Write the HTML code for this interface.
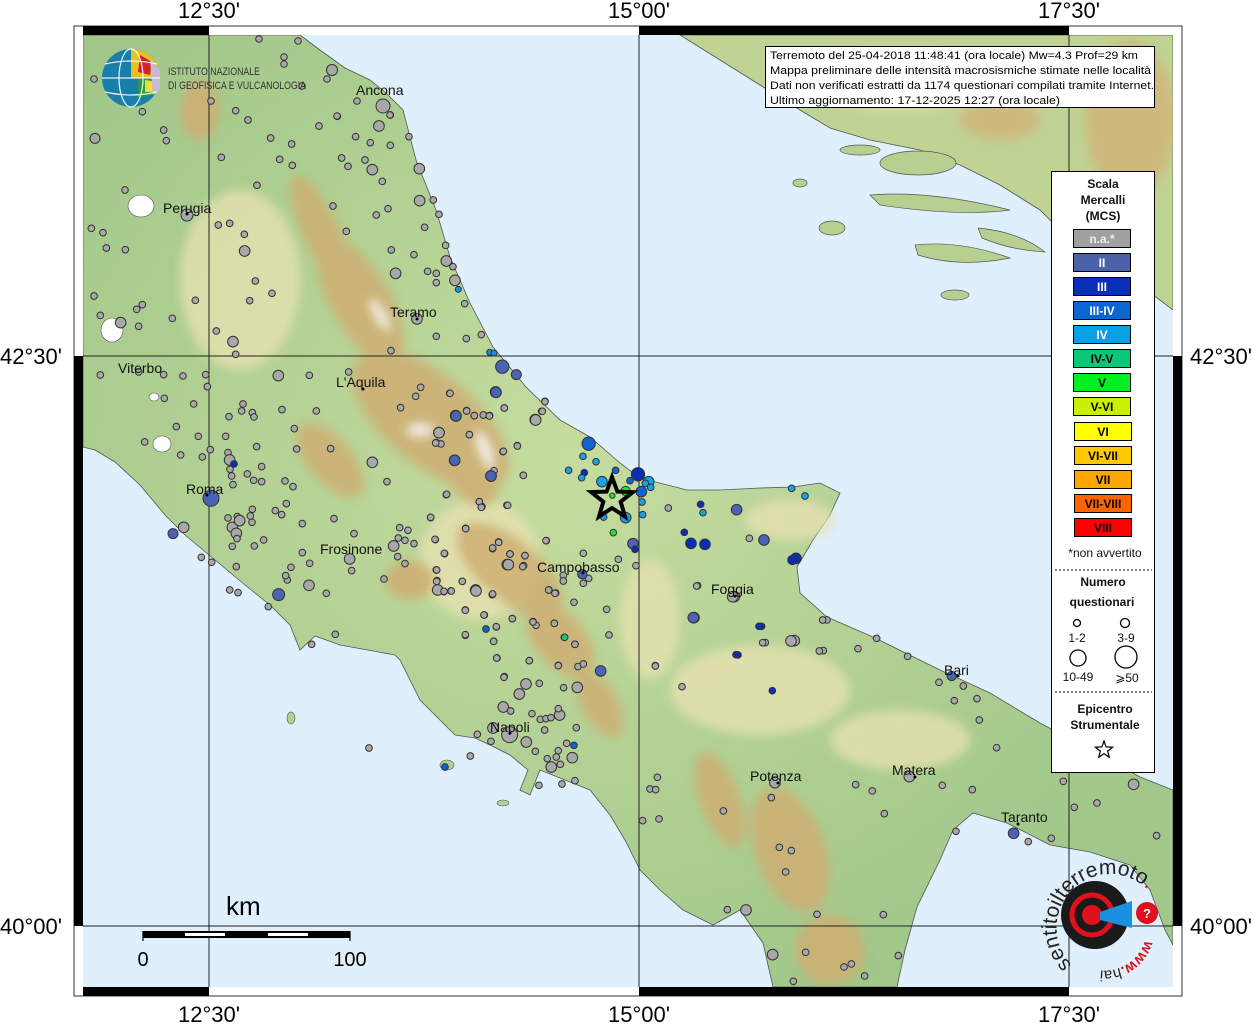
<!DOCTYPE html>
<html><head><meta charset="utf-8"><style>
html,body{margin:0;padding:0;background:#fff;width:1255px;height:1024px;overflow:hidden}
svg{display:block}
text{font-family:"Liberation Sans","DejaVu Sans",sans-serif}
</style></head><body>
<svg width="1255" height="1024" viewBox="0 0 1255 1024" xmlns="http://www.w3.org/2000/svg">
<defs>
<clipPath id="mc"><rect x="83" y="35" width="1090" height="952"/></clipPath>
<radialGradient id="lg" cx="45%" cy="45%" r="60%"><stop offset="0" stop-color="#c6dc9f"/><stop offset="1" stop-color="#a1c78a"/></radialGradient>
<filter id="bl" x="-20%" y="-20%" width="140%" height="140%"><feGaussianBlur stdDeviation="5"/></filter>
</defs>
<rect x="74" y="26" width="1108" height="970" fill="#fff" stroke="#333" stroke-width="1"/>
<rect x="83" y="26" width="126" height="9" fill="#000"/>
<rect x="639" y="26" width="430" height="9" fill="#000"/>
<rect x="83" y="987" width="126" height="9" fill="#000"/>
<rect x="639" y="987" width="430" height="9" fill="#000"/>
<rect x="74" y="356" width="9" height="570" fill="#000"/>
<rect x="1173" y="356" width="9" height="570" fill="#000"/>
<g clip-path="url(#mc)">
<rect x="83" y="35" width="1090" height="952" fill="#dff0fc"/>
<path id="italy" fill="url(#lg)" stroke="#555" stroke-width="0.8" d="M83,35 L300,35 L320,50 L345,68 L370,80 L385,92 L403,110 L416,160 L436,210 L450,257 L470,303 L493,347 L526,387 L560,420 L590,437 L620,463 L640,478 L687,490 L720,490 L760,488 L793,487 L820,483 L840,493 L830,515 L813,540 L797,567 L800,593 L827,617 L873,637 L940,670 L990,693 L1040,723 L1100,755 L1140,777 L1173,790 L1173,945 L1165,930 L1150,890 L1130,865 L1090,852 L1050,845 L1007,823 L973,813 L953,830 L940,860 L917,907 L905,950 L897,987 L773,987 L763,943 L740,910 L713,925 L683,910 L660,890 L640,870 L625,840 L610,815 L590,790 L560,778 L540,770 L530,795 L520,790 L528,770 L510,755 L490,745 L475,738 L455,735 L420,700 L400,660 L395,655 L340,645 L315,636 L300,650 L290,625 L270,605 L245,585 L215,560 L185,535 L165,515 L140,485 L115,462 L95,450 L83,447 Z"/>
<path fill="#bfd394" stroke="#555" stroke-width="0.8" d="M680,35 L1173,35 L1173,310 L1140,285 L1100,260 L1060,230 L1040,210 L1000,185 L960,165 L920,150 L870,140 L830,128 L800,110 L760,85 L720,60 Z"/>
<g filter="url(#bl)">
<g fill="#d3b47a" opacity="0.8">
<ellipse cx="1130" cy="120" rx="45" ry="80"/>
<ellipse cx="1000" cy="120" rx="40" ry="20"/>
<ellipse cx="1080" cy="210" rx="20" ry="30"/>
</g>
<g fill="#efe4b8" opacity="0.7">
<ellipse cx="900" cy="80" rx="80" ry="30"/>
</g>
</g>
<g fill="#b8cf92" stroke="#555" stroke-width="0.7">
<ellipse cx="918" cy="163" rx="38" ry="12"/>
<path d="M870,195 Q930,190 1010,210 Q960,217 880,205 Z"/>
<path d="M915,245 Q960,240 1010,258 Q960,268 918,255 Z"/>
<path d="M978,228 Q1020,232 1045,252 Q1010,250 982,238 Z"/>
<ellipse cx="832" cy="228" rx="13" ry="7"/>
<ellipse cx="955" cy="295" rx="14" ry="5"/>
<ellipse cx="800" cy="183" rx="7" ry="4"/>
<ellipse cx="860" cy="150" rx="20" ry="5"/>
</g>
<g clip-path="url(#mc)" filter="url(#bl)">
<g fill="#e9e2b2" opacity="0.75">
<ellipse cx="240" cy="280" rx="60" ry="90"/>
<ellipse cx="760" cy="690" rx="90" ry="45"/>
<ellipse cx="790" cy="520" rx="45" ry="20"/>
<ellipse cx="480" cy="560" rx="60" ry="60"/>
<ellipse cx="650" cy="620" rx="30" ry="60"/>
<ellipse cx="900" cy="740" rx="70" ry="30"/>
</g>
<g fill="#cfae73" opacity="0.85">
<ellipse cx="320" cy="230" rx="18" ry="60" transform="rotate(-25 320 230)"/>
<ellipse cx="360" cy="300" rx="30" ry="70" transform="rotate(-30 360 300)"/>
<ellipse cx="430" cy="420" rx="45" ry="95" transform="rotate(-50 430 420)"/>
<ellipse cx="330" cy="460" rx="22" ry="45" transform="rotate(-40 330 460)"/>
<ellipse cx="470" cy="470" rx="25" ry="40" transform="rotate(-30 470 470)"/>
<ellipse cx="510" cy="570" rx="30" ry="65" transform="rotate(-50 510 570)"/>
<ellipse cx="560" cy="640" rx="25" ry="45" transform="rotate(-40 560 640)"/>
<ellipse cx="600" cy="705" rx="18" ry="35" transform="rotate(-30 600 705)"/>
<ellipse cx="720" cy="800" rx="20" ry="50" transform="rotate(-20 720 800)"/>
<ellipse cx="790" cy="850" rx="35" ry="65" transform="rotate(-20 790 850)"/>
<ellipse cx="830" cy="950" rx="35" ry="35"/>
<ellipse cx="200" cy="110" rx="20" ry="30"/>
<ellipse cx="410" cy="580" rx="25" ry="20"/>
</g>
</g>
<g fill="#f6f2ee" opacity="0.9" filter="url(#bl)">
<ellipse cx="380" cy="315" rx="6" ry="18" transform="rotate(-30 380 315)"/>
<ellipse cx="485" cy="450" rx="7" ry="20" transform="rotate(-20 485 450)"/>
<ellipse cx="420" cy="430" rx="14" ry="7"/>
</g>
<g fill="#fff" stroke="#555" stroke-width="0.6">
<ellipse cx="141" cy="206" rx="13" ry="11"/>
<ellipse cx="112" cy="330" rx="11" ry="12"/>
<ellipse cx="162" cy="444" rx="9" ry="8"/>
<ellipse cx="154" cy="397" rx="5" ry="4"/>
</g>
<g fill="#b8cf92" stroke="#555" stroke-width="0.6">
<ellipse cx="447" cy="765" rx="7" ry="5"/>
<ellipse cx="291" cy="718" rx="4" ry="6"/>
<ellipse cx="503" cy="803" rx="6" ry="3"/>
</g>
<g stroke="#222" stroke-width="1">
<line x1="209" y1="35" x2="209" y2="987"/><line x1="639" y1="35" x2="639" y2="987"/><line x1="1069" y1="35" x2="1069" y2="987"/>
<line x1="83" y1="356" x2="1173" y2="356"/><line x1="83" y1="926" x2="1173" y2="926"/>
</g>
<g stroke="#333" stroke-width="3" transform="translate(83,100) scale(0.3333)">
<g fill="#a8a8a8">
<circle cx="178" cy="35" r="10"/><circle cx="242" cy="90" r="10"/><circle cx="250" cy="122" r="10"/><circle cx="36" cy="115" r="15"/><circle cx="458" cy="32" r="10"/><circle cx="495" cy="60" r="10"/><circle cx="415" cy="172" r="10"/><circle cx="563" cy="114" r="10"/><circle cx="626" cy="132" r="10"/><circle cx="590" cy="178" r="10"/><circle cx="628" cy="196" r="10"/><circle cx="708" cy="78" r="10"/><circle cx="763" cy="49" r="10"/><circle cx="903" cy="18" r="18"/><circle cx="888" cy="78" r="16"/><circle cx="922" cy="45" r="10"/><circle cx="818" cy="110" r="10"/><circle cx="862" cy="128" r="10"/><circle cx="922" cy="136" r="10"/><circle cx="978" cy="110" r="10"/><circle cx="776" cy="174" r="10"/><circle cx="795" cy="199" r="10"/><circle cx="846" cy="180" r="10"/><circle cx="868" cy="209" r="16"/><circle cx="1009" cy="206" r="16"/><circle cx="898" cy="244" r="10"/><circle cx="522" cy="256" r="10"/><circle cx="126" cy="270" r="10"/><circle cx="312" cy="345" r="18"/><circle cx="406" cy="375" r="10"/><circle cx="440" cy="370" r="10"/><circle cx="484" cy="403" r="10"/><circle cx="25" cy="385" r="10"/><circle cx="60" cy="398" r="10"/><circle cx="70" cy="444" r="10"/><circle cx="127" cy="449" r="10"/><circle cx="485" cy="453" r="16"/><circle cx="750" cy="318" r="10"/><circle cx="915" cy="326" r="10"/><circle cx="880" cy="345" r="10"/><circle cx="1010" cy="302" r="16"/><circle cx="1051" cy="300" r="10"/><circle cx="1068" cy="343" r="10"/><circle cx="1025" cy="382" r="10"/><circle cx="790" cy="394" r="10"/><circle cx="925" cy="450" r="10"/><circle cx="993" cy="464" r="10"/><circle cx="1088" cy="436" r="10"/><circle cx="1090" cy="483" r="16"/><circle cx="1110" cy="500" r="10"/><circle cx="938" cy="520" r="16"/><circle cx="1034" cy="514" r="10"/><circle cx="1060" cy="520" r="10"/><circle cx="1060" cy="548" r="10"/><circle cx="1116" cy="541" r="16"/><circle cx="1145" cy="611" r="10"/><circle cx="517" cy="543" r="10"/><circle cx="567" cy="580" r="10"/><circle cx="500" cy="602" r="10"/><circle cx="337" cy="601" r="10"/><circle cx="178" cy="614" r="10"/><circle cx="161" cy="628" r="10"/><circle cx="33" cy="588" r="10"/><circle cx="52" cy="646" r="10"/><circle cx="113" cy="668" r="16"/><circle cx="167" cy="679" r="10"/><circle cx="268" cy="655" r="10"/><circle cx="400" cy="693" r="10"/><circle cx="450" cy="725" r="16"/><circle cx="458" cy="763" r="10"/><circle cx="1002" cy="657" r="16"/><circle cx="1060" cy="709" r="10"/><circle cx="1150" cy="716" r="10"/><circle cx="1195" cy="704" r="10"/><circle cx="924" cy="752" r="10"/><circle cx="52" cy="825" r="10"/><circle cx="167" cy="816" r="10"/><circle cx="242" cy="824" r="10"/><circle cx="300" cy="828" r="10"/><circle cx="368" cy="824" r="10"/><circle cx="373" cy="860" r="10"/><circle cx="586" cy="827" r="16"/><circle cx="679" cy="826" r="10"/><circle cx="797" cy="816" r="10"/><circle cx="1013" cy="862" r="10"/><circle cx="998" cy="889" r="10"/><circle cx="1100" cy="880" r="10"/><circle cx="953" cy="923" r="10"/><circle cx="1151" cy="932" r="10"/><circle cx="1174" cy="947" r="10"/><circle cx="1202" cy="945" r="10"/><circle cx="1220" cy="947" r="10"/><circle cx="1264" cy="924" r="10"/><circle cx="1357" cy="959" r="16"/><circle cx="1386" cy="904" r="10"/><circle cx="1376" cy="934" r="10"/><circle cx="244" cy="895" r="10"/><circle cx="332" cy="912" r="10"/><circle cx="480" cy="912" r="10"/><circle cx="476" cy="933" r="10"/><circle cx="508" cy="938" r="10"/><circle cx="513" cy="951" r="10"/><circle cx="597" cy="929" r="10"/><circle cx="700" cy="933" r="10"/><circle cx="438" cy="950" r="10"/><circle cx="280" cy="980" r="10"/><circle cx="346" cy="1009" r="10"/><circle cx="185" cy="1026" r="10"/><circle cx="293" cy="1065" r="10"/><circle cx="358" cy="1071" r="10"/><circle cx="382" cy="1049" r="10"/><circle cx="428" cy="1009" r="10"/><circle cx="435" cy="1058" r="10"/><circle cx="440" cy="1080" r="16"/><circle cx="441" cy="1108" r="10"/><circle cx="446" cy="1128" r="10"/><circle cx="450" cy="1154" r="10"/><circle cx="493" cy="1122" r="10"/><circle cx="512" cy="1141" r="10"/><circle cx="536" cy="1145" r="10"/><circle cx="536" cy="1100" r="10"/><circle cx="521" cy="1040" r="10"/><circle cx="634" cy="986" r="10"/><circle cx="641" cy="1047" r="10"/><circle cx="743" cy="1046" r="10"/><circle cx="868" cy="1087" r="16"/><circle cx="912" cy="1145" r="10"/><circle cx="1068" cy="998" r="16"/><circle cx="1060" cy="1028" r="10"/><circle cx="1074" cy="1032" r="10"/><circle cx="1159" cy="1004" r="10"/><circle cx="1260" cy="1055" r="10"/><circle cx="1303" cy="1037" r="10"/><circle cx="1321" cy="1126" r="10"/><circle cx="1090" cy="1184" r="10"/><circle cx="1189" cy="1205" r="10"/><circle cx="1197" cy="1220" r="10"/><circle cx="1272" cy="1216" r="10"/><circle cx="606" cy="1143" r="10"/><circle cx="630" cy="1160" r="10"/><circle cx="610" cy="1211" r="10"/><circle cx="577" cy="1232" r="10"/><circle cx="596" cy="1244" r="10"/><circle cx="658" cy="1271" r="10"/><circle cx="753" cy="1256" r="10"/><circle cx="813" cy="1301" r="10"/><circle cx="302" cy="1282" r="16"/><circle cx="448" cy="1282" r="16"/><circle cx="435" cy="1254" r="10"/><circle cx="463" cy="1250" r="10"/><circle cx="470" cy="1262" r="16"/><circle cx="502" cy="1248" r="10"/><circle cx="508" cy="1228" r="10"/><circle cx="507" cy="1267" r="10"/><circle cx="460" cy="1300" r="16"/><circle cx="462" cy="1316" r="10"/><circle cx="448" cy="1339" r="10"/><circle cx="542" cy="1320" r="10"/><circle cx="514" cy="1338" r="10"/><circle cx="355" cy="1372" r="10"/><circle cx="386" cy="1387" r="10"/><circle cx="460" cy="1400" r="10"/><circle cx="658" cy="1358" r="10"/><circle cx="680" cy="1390" r="10"/><circle cx="800" cy="1377" r="16"/><circle cx="806" cy="1412" r="10"/><circle cx="903" cy="1437" r="10"/><circle cx="932" cy="1338" r="16"/><circle cx="950" cy="1283" r="10"/><circle cx="975" cy="1291" r="10"/><circle cx="966" cy="1321" r="10"/><circle cx="993" cy="1331" r="10"/><circle cx="946" cy="1314" r="10"/><circle cx="944" cy="1370" r="10"/><circle cx="966" cy="1391" r="10"/><circle cx="1043" cy="1253" r="10"/><circle cx="1148" cy="1285" r="10"/><circle cx="1057" cy="1319" r="10"/><circle cx="1085" cy="1361" r="10"/><circle cx="1060" cy="1410" r="10"/><circle cx="1062" cy="1442" r="10"/><circle cx="1138" cy="1444" r="10"/><circle cx="1229" cy="1346" r="10"/><circle cx="1247" cy="1326" r="10"/><circle cx="1273" cy="1394" r="16"/><circle cx="1281" cy="1362" r="10"/><circle cx="1322" cy="1397" r="10"/><circle cx="1326" cy="1367" r="10"/><circle cx="1390" cy="1322" r="10"/><circle cx="678" cy="1456" r="16"/><circle cx="613" cy="1440" r="10"/><circle cx="608" cy="1427" r="10"/><circle cx="624" cy="1402" r="10"/><circle cx="440" cy="1470" r="10"/><circle cx="465" cy="1478" r="10"/><circle cx="730" cy="1480" r="10"/><circle cx="1062" cy="1470" r="10"/><circle cx="1083" cy="1475" r="10"/><circle cx="1104" cy="1473" r="10"/><circle cx="1178" cy="1470" r="16"/><circle cx="1228" cy="1484" r="10"/><circle cx="1398" cy="1470" r="10"/><circle cx="1418" cy="1479" r="10"/>
</g>
<g fill="#4b62b5"><circle cx="384" cy="1195" r="24"/><circle cx="270" cy="1301" r="15"/><circle cx="1258" cy="800" r="20"/><circle cx="1300" cy="824" r="15"/><circle cx="1238" cy="876" r="16"/><circle cx="1118" cy="947" r="16"/><circle cx="1115" cy="1081" r="16"/><circle cx="1224" cy="1128" r="16"/><circle cx="587" cy="1484" r="18"/></g>
<g fill="#0b2db5"><circle cx="453" cy="1092" r="10"/></g>
<g fill="#1a8de0"><circle cx="1126" cy="568" r="9"/><circle cx="1220" cy="757" r="9"/><circle cx="1233" cy="759" r="9"/></g>
</g>
<g stroke="#333" stroke-width="3" transform="translate(420,380) scale(0.3333)">
<g fill="#a8a8a8">
<circle cx="90" cy="40" r="10"/><circle cx="253" cy="84" r="10"/><circle cx="375" cy="65" r="10"/><circle cx="140" cy="93" r="10"/><circle cx="163" cy="107" r="10"/><circle cx="190" cy="105" r="10"/><circle cx="208" cy="108" r="10"/><circle cx="347" cy="120" r="16"/><circle cx="367" cy="94" r="10"/><circle cx="57" cy="158" r="16"/><circle cx="148" cy="164" r="10"/><circle cx="47" cy="189" r="10"/><circle cx="250" cy="214" r="10"/><circle cx="292" cy="198" r="10"/><circle cx="222" cy="272" r="10"/><circle cx="310" cy="286" r="10"/><circle cx="80" cy="343" r="10"/><circle cx="178" cy="365" r="10"/><circle cx="184" cy="382" r="10"/><circle cx="263" cy="376" r="10"/><circle cx="32" cy="412" r="10"/><circle cx="137" cy="446" r="10"/><circle cx="45" cy="478" r="10"/><circle cx="236" cy="487" r="10"/><circle cx="218" cy="504" r="10"/><circle cx="73" cy="520" r="10"/><circle cx="270" cy="522" r="10"/><circle cx="315" cy="527" r="10"/><circle cx="265" cy="554" r="16"/><circle cx="308" cy="560" r="10"/><circle cx="378" cy="482" r="10"/><circle cx="490" cy="520" r="10"/><circle cx="595" cy="538" r="10"/><circle cx="648" cy="557" r="10"/><circle cx="745" cy="384" r="10"/><circle cx="988" cy="475" r="10"/><circle cx="833" cy="617" r="10"/><circle cx="943" cy="650" r="16"/><circle cx="50" cy="570" r="10"/><circle cx="50" cy="604" r="10"/><circle cx="53" cy="630" r="16"/><circle cx="72" cy="634" r="10"/><circle cx="94" cy="633" r="10"/><circle cx="127" cy="604" r="10"/><circle cx="168" cy="633" r="16"/><circle cx="218" cy="642" r="10"/><circle cx="136" cy="690" r="10"/><circle cx="193" cy="705" r="10"/><circle cx="229" cy="741" r="10"/><circle cx="277" cy="716" r="10"/><circle cx="339" cy="725" r="10"/><circle cx="348" cy="736" r="10"/><circle cx="386" cy="630" r="10"/><circle cx="405" cy="640" r="10"/><circle cx="462" cy="667" r="10"/><circle cx="403" cy="730" r="10"/><circle cx="430" cy="586" r="10"/><circle cx="430" cy="603" r="10"/><circle cx="506" cy="595" r="10"/><circle cx="490" cy="610" r="10"/><circle cx="560" cy="688" r="10"/><circle cx="567" cy="765" r="10"/><circle cx="465" cy="793" r="10"/><circle cx="136" cy="766" r="10"/><circle cx="221" cy="784" r="10"/><circle cx="231" cy="834" r="10"/><circle cx="328" cy="842" r="10"/><circle cx="415" cy="856" r="10"/><circle cx="474" cy="860" r="10"/><circle cx="490" cy="852" r="10"/><circle cx="253" cy="890" r="10"/><circle cx="706" cy="857" r="10"/><circle cx="1221" cy="720" r="10"/><circle cx="1036" cy="788" r="10"/><circle cx="1123" cy="782" r="16"/><circle cx="1210" cy="812" r="10"/>
</g>
<g fill="#4b62b5"><circle cx="228" cy="37" r="16"/><circle cx="108" cy="108" r="16"/><circle cx="104" cy="241" r="16"/><circle cx="213" cy="288" r="16"/><circle cx="1032" cy="480" r="16"/><circle cx="822" cy="713" r="16"/><circle cx="542" cy="873" r="16"/><circle cx="487" cy="583" r="14"/><circle cx="950" cy="389" r="16"/><circle cx="639" cy="491" r="16"/></g>
<g fill="#0b2db5"><circle cx="654" cy="283" r="20"/><circle cx="493" cy="278" r="10"/><circle cx="813" cy="490" r="16"/><circle cx="855" cy="493" r="16"/><circle cx="1128" cy="535" r="16"/><circle cx="793" cy="457" r="10"/><circle cx="842" cy="373" r="10"/><circle cx="1025" cy="739" r="10"/><circle cx="954" cy="825" r="10"/><circle cx="645" cy="508" r="10"/></g>
<g fill="#0f63d2"><circle cx="506" cy="191" r="20"/><circle cx="587" cy="271" r="10"/><circle cx="664" cy="335" r="16"/><circle cx="630" cy="302" r="10"/></g>
<g fill="#15a0e8"><circle cx="489" cy="229" r="10"/><circle cx="528" cy="245" r="10"/><circle cx="446" cy="271" r="10"/><circle cx="485" cy="293" r="10"/><circle cx="546" cy="305" r="16"/><circle cx="686" cy="305" r="16"/><circle cx="676" cy="310" r="10"/><circle cx="692" cy="322" r="10"/><circle cx="617" cy="413" r="16"/><circle cx="666" cy="366" r="10"/><circle cx="668" cy="404" r="10"/><circle cx="849" cy="398" r="10"/><circle cx="1115" cy="325" r="10"/><circle cx="1155" cy="348" r="10"/><circle cx="551" cy="411" r="10"/></g>
<g fill="#0ac878"><circle cx="433" cy="772" r="10"/></g>
<g fill="#11ee22"><circle cx="617" cy="333" r="14"/><circle cx="580" cy="458" r="10"/><circle cx="577" cy="347" r="8"/></g>
</g>
<g stroke="#333" stroke-width="3" transform="translate(83,600) scale(0.3333)">
<g fill="#a8a8a8">
<circle cx="556" cy="20" r="10"/><circle cx="686" cy="133" r="10"/><circle cx="757" cy="103" r="10"/><circle cx="858" cy="444" r="10"/><circle cx="1147" cy="31" r="10"/><circle cx="1203" cy="45" r="10"/><circle cx="1240" cy="80" r="10"/><circle cx="1288" cy="56" r="10"/><circle cx="1350" cy="66" r="10"/><circle cx="1414" cy="70" r="10"/><circle cx="1147" cy="104" r="10"/><circle cx="1232" cy="124" r="10"/><circle cx="1241" cy="174" r="10"/><circle cx="1339" cy="182" r="10"/><circle cx="1426" cy="197" r="10"/><circle cx="1263" cy="232" r="10"/><circle cx="1309" cy="282" r="16"/><circle cx="1329" cy="252" r="16"/><circle cx="1369" cy="250" r="10"/><circle cx="1442" cy="263" r="10"/><circle cx="1483" cy="262" r="16"/><circle cx="1261" cy="321" r="16"/><circle cx="1283" cy="333" r="10"/><circle cx="1347" cy="341" r="10"/><circle cx="1372" cy="358" r="10"/><circle cx="1389" cy="356" r="10"/><circle cx="1404" cy="353" r="10"/><circle cx="1430" cy="345" r="16"/><circle cx="1426" cy="326" r="10"/><circle cx="1230" cy="384" r="16"/><circle cx="1280" cy="404" r="24"/><circle cx="1330" cy="426" r="16"/><circle cx="1385" cy="390" r="10"/><circle cx="1183" cy="403" r="10"/><circle cx="1224" cy="424" r="10"/><circle cx="1162" cy="468" r="10"/><circle cx="1357" cy="454" r="10"/><circle cx="1420" cy="471" r="10"/><circle cx="1426" cy="452" r="10"/><circle cx="1468" cy="473" r="16"/><circle cx="1393" cy="476" r="10"/><circle cx="1405" cy="501" r="16"/><circle cx="1432" cy="493" r="10"/><circle cx="1476" cy="542" r="10"/><circle cx="1437" cy="552" r="10"/><circle cx="1368" cy="556" r="10"/><circle cx="1451" cy="430" r="10"/><circle cx="1480" cy="383" r="10"/><circle cx="1476" cy="133" r="10"/>
</g>
<g fill="#0f63d2"><circle cx="1209" cy="87" r="10"/><circle cx="1473" cy="436" r="10"/><circle cx="1086" cy="501" r="10"/></g>
<g fill="#0ac878"><circle cx="1445" cy="112" r="10"/></g>
</g>
<g stroke="#333" stroke-width="3" transform="translate(640,560) scale(0.3333)">
<g fill="#a8a8a8">
<circle cx="170" cy="78" r="10"/><circle cx="278" cy="110" r="16"/><circle cx="548" cy="180" r="10"/><circle cx="453" cy="243" r="16"/><circle cx="368" cy="248" r="10"/><circle cx="538" cy="273" r="10"/><circle cx="654" cy="266" r="10"/><circle cx="710" cy="235" r="10"/><circle cx="803" cy="289" r="10"/><circle cx="46" cy="318" r="10"/><circle cx="126" cy="380" r="10"/><circle cx="897" cy="367" r="10"/><circle cx="970" cy="378" r="10"/><circle cx="943" cy="422" r="10"/><circle cx="1011" cy="416" r="10"/><circle cx="1018" cy="480" r="10"/><circle cx="1070" cy="563" r="10"/><circle cx="52" cy="652" r="10"/><circle cx="30" cy="687" r="10"/><circle cx="47" cy="689" r="10"/><circle cx="405" cy="668" r="16"/><circle cx="394" cy="713" r="10"/><circle cx="250" cy="753" r="10"/><circle cx="57" cy="777" r="10"/><circle cx="8" cy="782" r="10"/><circle cx="647" cy="674" r="10"/><circle cx="697" cy="693" r="10"/><circle cx="808" cy="650" r="16"/><circle cx="907" cy="676" r="10"/><circle cx="997" cy="689" r="10"/><circle cx="733" cy="761" r="10"/><circle cx="948" cy="814" r="10"/><circle cx="1165" cy="845" r="10"/><circle cx="1234" cy="835" r="10"/><circle cx="1270" cy="664" r="10"/><circle cx="1303" cy="742" r="10"/><circle cx="1371" cy="729" r="10"/><circle cx="1481" cy="673" r="16"/><circle cx="1550" cy="827" r="10"/><circle cx="418" cy="862" r="10"/><circle cx="454" cy="872" r="10"/><circle cx="437" cy="936" r="10"/><circle cx="262" cy="1049" r="10"/><circle cx="318" cy="1050" r="16"/><circle cx="531" cy="1063" r="10"/><circle cx="730" cy="1064" r="10"/><circle cx="398" cy="1184" r="16"/><circle cx="497" cy="1177" r="10"/><circle cx="612" cy="1221" r="10"/><circle cx="634" cy="1212" r="10"/><circle cx="674" cy="1248" r="10"/><circle cx="775" cy="1187" r="10"/><circle cx="460" cy="1264" r="10"/>
</g>
<g fill="#4b62b5"><circle cx="160" cy="173" r="16"/><circle cx="935" cy="348" r="14"/><circle cx="1121" cy="820" r="16"/></g>
<g fill="#0b2db5"><circle cx="357" cy="199" r="10"/><circle cx="288" cy="284" r="10"/><circle cx="397" cy="392" r="10"/><circle cx="457" cy="0" r="14"/></g>
</g>
<g fill="#a8a8a8" stroke="#333" stroke-width="1">
<circle cx="259" cy="39" r="3.3"/><circle cx="298" cy="41" r="3.3"/><circle cx="284" cy="57" r="3.3"/><circle cx="284" cy="64" r="3.3"/><circle cx="332" cy="70" r="5.5"/><circle cx="327" cy="79" r="3.3"/><circle cx="302" cy="86" r="3.3"/><circle cx="211" cy="101" r="3.3"/><circle cx="337" cy="116" r="3.3"/><circle cx="357" cy="101" r="3.3"/><circle cx="383" cy="106" r="7"/><circle cx="390" cy="115" r="3.3"/><circle cx="94" cy="79" r="3.3"/>
</g>
<path d="M612,477 L617.4,491.6 L632.9,492.1 L620.7,501.7 L625,516.6 L612,508 L599,516.6 L603.3,501.7 L591.1,492.1 L606.6,491.6 Z" fill="none" stroke="#000" stroke-width="4"/>
<g font-size="14" fill="#111">
<text x="356" y="95">Ancona</text>
<text x="163" y="213">Perugia</text>
<text x="390" y="317">Teramo</text>
<text x="118" y="373">Viterbo</text>
<text x="336" y="387">L'Aquila</text>
<text x="186" y="494">Roma</text>
<text x="320" y="554">Frosinone</text>
<text x="537" y="572">Campobasso</text>
<text x="711" y="594">Foggia</text>
<text x="944" y="675">Bari</text>
<text x="490" y="732">Napoli</text>
<text x="892" y="775">Matera</text>
<text x="750" y="781">Potenza</text>
<text x="1001" y="822">Taranto</text>
</g>
<g fill="#000"><circle cx="187" cy="214" r="1.5"/><circle cx="417" cy="319" r="1.5"/><circle cx="363" cy="389" r="1.5"/><circle cx="207" cy="495" r="1.5"/><circle cx="583" cy="573" r="1.5"/><circle cx="735" cy="596" r="1.5"/><circle cx="958" cy="676" r="1.5"/><circle cx="510" cy="733" r="1.5"/><circle cx="778" cy="783" r="1.5"/><circle cx="915" cy="777" r="1.5"/><circle cx="1018" cy="824" r="1.5"/></g>
<text x="226" y="915" font-size="26" fill="#000">km</text>
<rect x="143" y="931" width="207" height="7" fill="#000"/>
<rect x="185" y="933" width="40" height="3" fill="#fff"/>
<rect x="268" y="933" width="40" height="3" fill="#fff"/>
<line x1="143" y1="931" x2="143" y2="941" stroke="#000" stroke-width="1.2"/>
<line x1="350" y1="931" x2="350" y2="941" stroke="#000" stroke-width="1.2"/>
<text x="143" y="966" font-size="20" text-anchor="middle">0</text>
<text x="350" y="966" font-size="20" text-anchor="middle">100</text>
<g>
<circle cx="131" cy="78" r="29" fill="#1a7fa8"/>
<path d="M131,49 A29,29 0 0 1 160,78 L131,78 Z" fill="#e8c020"/>
<path d="M140,55 L152,62 L150,75 L138,72 Z" fill="#d8202a"/>
<path d="M138,78 L158,80 L154,95 L138,98 Z" fill="#2a9a40"/>
<path d="M145,80 L157,82 L155,92 L145,92 Z" fill="#e8e040"/>
<path d="M150,60 L160,70 L160,90 L153,95 Z" fill="#c8b8d8"/>
<g stroke="#fff" stroke-width="1.2" fill="none" opacity="0.9"><ellipse cx="131" cy="78" rx="12" ry="29"/><line x1="102" y1="78" x2="160" y2="78"/><path d="M105,64 Q131,58 157,64"/><path d="M105,92 Q131,98 157,92"/></g>
<text x="168" y="75" font-size="11" fill="#333" textLength="92" lengthAdjust="spacingAndGlyphs">ISTITUTO NAZIONALE</text>
<text x="168" y="89" font-size="11" fill="#333" textLength="138" lengthAdjust="spacingAndGlyphs">DI GEOFISICA E VULCANOLOGIA</text>
</g>
<g>
<circle cx="1095" cy="915" r="34" fill="#1a1a1a"/>
<circle cx="1092" cy="915" r="20" fill="none" stroke="#e0101e" stroke-width="5"/>
<circle cx="1092" cy="915" r="10" fill="#e0101e"/>
<path d="M1100,912 L1132,901 L1132,928 L1100,920 Z" fill="#1a90e0"/>
<circle cx="1147" cy="913" r="11" fill="#e0101e"/>
<text x="1147" y="918" font-size="13" fill="#fff" text-anchor="middle" font-weight="bold">?</text>
<path id="arc" d="M1072,965 A52,52 0 1 1 1148,890" fill="none"/>
<text font-size="21" fill="#222"><textPath href="#arc">sentitoilterremoto<tspan fill="#e0101e">.it</tspan></textPath></text>
<path id="arc2" d="M1145,940 A42,42 0 0 1 1090,968" fill="none"/>
<text font-size="15" fill="#e0101e" font-weight="bold"><textPath href="#arc2">www.<tspan fill="#222" font-weight="normal">hai</tspan></textPath></text>
</g>
</g>
<g font-size="22" fill="#000">
<text x="209" y="18" text-anchor="middle">12°30'</text>
<text x="639" y="18" text-anchor="middle">15°00'</text>
<text x="1069" y="18" text-anchor="middle">17°30'</text>
<text x="209" y="1022" text-anchor="middle">12°30'</text>
<text x="639" y="1022" text-anchor="middle">15°00'</text>
<text x="1069" y="1022" text-anchor="middle">17°30'</text>
<text x="0" y="364">42°30'</text>
<text x="0" y="934">40°00'</text>
<text x="1190" y="364">42°30'</text>
<text x="1190" y="934">40°00'</text>
</g>
<rect x="765.5" y="46.5" width="389" height="61" fill="#fff" stroke="#000"/>
<g font-size="10.8" fill="#000">
<text x="770" y="59" textLength="368" lengthAdjust="spacingAndGlyphs">Terremoto del 25-04-2018 11:48:41 (ora locale) Mw=4.3 Prof=29 km</text>
<text x="770" y="74" textLength="381" lengthAdjust="spacingAndGlyphs">Mappa preliminare delle intensità macrosismiche stimate nelle località</text>
<text x="770" y="89" textLength="384" lengthAdjust="spacingAndGlyphs">Dati non verificati estratti da 1174 questionari compilati tramite Internet.</text>
<text x="770" y="104" textLength="290" lengthAdjust="spacingAndGlyphs">Ultimo aggiornamento: 17-12-2025 12:27 (ora locale)</text>
</g>
<rect x="1051.5" y="171.5" width="103" height="601" fill="#fff" stroke="#000"/>
<g font-family="DejaVu Sans,sans-serif" font-weight="bold" font-size="12" text-anchor="middle" fill="#111">
<text x="1103" y="188">Scala</text><text x="1103" y="204">Mercalli</text><text x="1103" y="220">(MCS)</text>
</g>
<g stroke="#000" stroke-width="1">
<rect x="1073.5" y="229.5" width="57" height="18" fill="#a0a0a0"/>
<rect x="1073.5" y="253.5" width="57" height="18" fill="#4b62ab"/>
<rect x="1073.5" y="277.5" width="57" height="18" fill="#0a2fb8"/>
<rect x="1073.5" y="301.5" width="57" height="18" fill="#0c66d0"/>
<rect x="1073.5" y="325.5" width="57" height="18" fill="#0aa0e6"/>
<rect x="1073.5" y="349.5" width="57" height="18" fill="#0ac878"/>
<rect x="1073.5" y="373.5" width="57" height="18" fill="#00f020"/>
<rect x="1073.5" y="397.5" width="57" height="18" fill="#c8f000"/>
<rect x="1074.5" y="422.5" width="57" height="18" fill="#ffff00"/>
<rect x="1074.5" y="446.5" width="57" height="18" fill="#ffc800"/>
<rect x="1074.5" y="470.5" width="57" height="18" fill="#ffa500"/>
<rect x="1074.5" y="494.5" width="57" height="18" fill="#ff6400"/>
<rect x="1074.5" y="518.5" width="57" height="18" fill="#ff0000"/>
</g>
<g font-family="DejaVu Sans,sans-serif" font-weight="bold" font-size="12" text-anchor="middle">
<text x="1102" y="243" fill="#eee">n.a.*</text>
<text x="1102" y="267" fill="#fff">II</text>
<text x="1102" y="291" fill="#fff">III</text>
<text x="1102" y="315" fill="#fff">III-IV</text>
<text x="1102" y="339" fill="#fff">IV</text>
<text x="1102" y="363" fill="#000">IV-V</text>
<text x="1102" y="387" fill="#000">V</text>
<text x="1102" y="411" fill="#000">V-VI</text>
<text x="1103" y="436" fill="#000">VI</text>
<text x="1103" y="460" fill="#000">VI-VII</text>
<text x="1103" y="484" fill="#000">VII</text>
<text x="1103" y="508" fill="#000">VII-VIII</text>
<text x="1103" y="532" fill="#000">VIII</text>
</g>
<text x="1105" y="557" font-family="DejaVu Sans,sans-serif" font-size="12" text-anchor="middle" fill="#111">*non avvertito</text>
<line x1="1055" y1="570" x2="1152" y2="570" stroke="#000" stroke-dasharray="2,2"/>
<g font-family="DejaVu Sans,sans-serif" font-weight="bold" font-size="12" text-anchor="middle" fill="#111">
<text x="1103" y="586">Numero</text><text x="1102" y="606">questionari</text>
</g>
<g fill="none" stroke="#000" stroke-width="1.3">
<circle cx="1077" cy="623" r="3.5"/><circle cx="1125" cy="623" r="4.5"/><circle cx="1078" cy="658" r="8"/><circle cx="1126" cy="657" r="11"/>
</g>
<g font-family="DejaVu Sans,sans-serif" font-size="12" text-anchor="middle" fill="#111">
<text x="1077" y="642">1-2</text><text x="1126" y="642">3-9</text><text x="1078" y="681">10-49</text><text x="1127" y="682">⩾50</text>
</g>
<line x1="1055" y1="692" x2="1152" y2="692" stroke="#000" stroke-dasharray="2,2"/>
<g font-family="DejaVu Sans,sans-serif" font-weight="bold" font-size="12" text-anchor="middle" fill="#111">
<text x="1105" y="713">Epicentro</text><text x="1105" y="729">Strumentale</text>
</g>
<path d="M1104,741 L1106.1,746.9 L1112.6,747.2 L1107.6,751.1 L1109.3,757.2 L1104,753.6 L1098.7,757.2 L1100.4,751.1 L1095.4,747.2 L1101.9,746.9 Z" fill="none" stroke="#000" stroke-width="1.2"/>
</svg>
</body></html>
